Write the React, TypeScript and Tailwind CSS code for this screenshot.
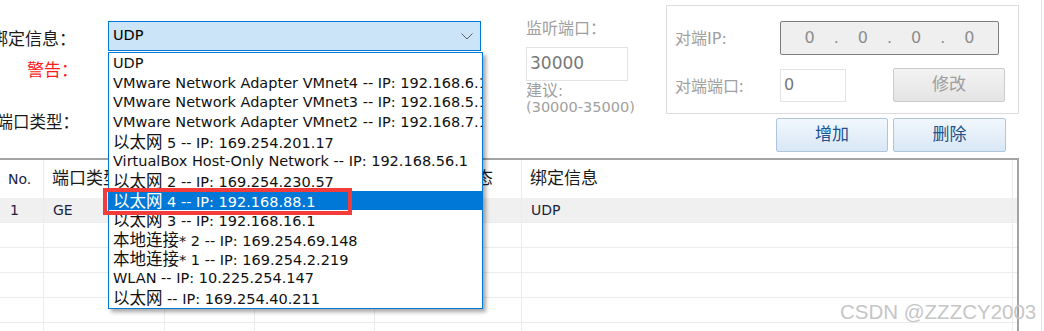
import React from "react";

const CJK = /([\u3400-\u9fff\uff00-\uffef]+)/;

// splits a mixed line so the Chinese runs get the bigger CJK size, like the Windows fallback font
function Mixed({ text, cjkClass }: { text: string; cjkClass: string }) {
  return (
    <>
      {text.split(CJK).map((part, i) =>
        CJK.test(part) ? (
          <span key={i} className={cjkClass}>
            {part}
          </span>
        ) : (
          <span key={i}>{part}</span>
        )
      )}
    </>
  );
}

const adapters = [
  "UDP",
  "VMware Network Adapter VMnet4 -- IP: 192.168.6.1",
  "VMware Network Adapter VMnet3 -- IP: 192.168.5.1",
  "VMware Network Adapter VMnet2 -- IP: 192.168.7.1",
  "以太网 5 -- IP: 169.254.201.17",
  "VirtualBox Host-Only Network -- IP: 192.168.56.1",
  "以太网 2 -- IP: 169.254.230.57",
  "以太网 4 -- IP: 192.168.88.1",
  "以太网 3 -- IP: 192.168.16.1",
  "本地连接* 2 -- IP: 169.254.69.148",
  "本地连接* 1 -- IP: 169.254.2.219",
  "WLAN -- IP: 10.225.254.147",
  "以太网 -- IP: 169.254.40.211",
];

const selectedIndex = 7;

const headers = ["No.", "端口类型", "端口编号", "本地端口", "端口连接状态", "绑定信息"];

const rows = [
  ["1", "GE", "", "", "", "UDP"],
  ["", "", "", "", "", ""],
  ["", "", "", "", "", ""],
  ["", "", "", "", "", ""],
  ["", "", "", "", "", ""],
  ["", "", "", "", "", ""],
];

const Chevron = () => (
  <svg width="12" height="7" viewBox="0 0 12 7" fill="none">
    <path d="M0.5 0.5 L6 6 L11.5 0.5" stroke="#5f5f5f" strokeWidth="1" />
  </svg>
);

const BlueButton = ({ label, width }: { label: string; width: string }) => (
  <div
    className={`${width} h-[34px] flex items-center justify-center rounded-[2px] border border-[#adc6de] bg-gradient-to-b from-[#f1f7fd] to-[#d9e7f5] text-[17px] text-[#22528f]`}
  >
    {label}
  </div>
);

export default function App() {
  return (
    <div className="relative w-[1044px] h-[331px] overflow-hidden bg-white font-['DejaVu_Sans','Noto_Sans_CJK_SC',sans-serif] text-[#1a1a1a]">
      <div className="w-[1042px] h-[331px] border-r border-[#e6e6e6]">
        {/* form area */}
        <div className="flex h-[158px]">
          {/* labels */}
          <div className="w-[108px] shrink-0 flex flex-col pt-[28px] font-['Noto_Sans_CJK_SC',sans-serif]">
            <div className="w-[76px] h-[20px] flex justify-end items-center whitespace-nowrap text-[17px]">
              <span>绑定信息：</span>
            </div>
            <div className="w-[78px] h-[20px] mt-[11px] flex justify-end items-center whitespace-nowrap text-[17px] text-[#ff1a1a]">
              <span>警告：</span>
            </div>
            <div className="w-[79px] h-[20px] mt-[32px] flex justify-end items-center whitespace-nowrap text-[16.5px]">
              <span>端口类型：</span>
            </div>
          </div>

          {/* combo box */}
          <div className="mt-[21px] w-[373px] h-[30px] shrink-0 flex items-center justify-between border border-[#0078d7] bg-[#cce4f7] pl-[4px] pr-[7px] text-[14.5px] text-black">
            <span>UDP</span>
            <Chevron />
          </div>

          {/* listen port */}
          <div className="ml-[45px] w-[102px] shrink-0 flex flex-col pt-[17px] text-[#a0a0a0]">
            <div className="h-[20px] leading-[20px] text-[16px] whitespace-nowrap font-['Noto_Sans_CJK_SC',sans-serif]">监听端口：</div>
            <div className="mt-[10px] h-[34px] border border-[#e3e3e3] flex items-center pl-[3px] text-[17px] text-[#777]">
              30000
            </div>
            <div className="mt-[2px] leading-[16px] text-[15px] whitespace-nowrap">
              <Mixed text="建议:" cjkClass="text-[16px]" />
            </div>
            <div className="leading-[16px] text-[14.5px] whitespace-nowrap">(30000-35000)</div>
          </div>

          {/* peer settings */}
          <div className="ml-[38px] shrink-0 flex flex-col">
            <div className="mt-[5px] w-[353px] h-[109px] border border-[#dcdcdc] pl-[8px] pt-[15px] text-[#a0a0a0]">
              <div className="flex items-center">
                <div className="w-[105px] text-[16px] whitespace-nowrap">
                  <Mixed text="对端IP:" cjkClass="font-['Noto_Sans_CJK_SC',sans-serif]" />
                </div>
                <div className="w-[219px] h-[34px] rounded-[2px] border border-[#7d7d7d] bg-[#efefef] flex items-center justify-around px-[14px] text-[16px] text-[#8d8d8d]">
                  <span>0</span>
                  <span>.</span>
                  <span>0</span>
                  <span>.</span>
                  <span>0</span>
                  <span>.</span>
                  <span>0</span>
                </div>
              </div>
              <div className="mt-[13px] flex items-center">
                <div className="w-[105px] text-[16px] whitespace-nowrap font-['Noto_Sans_CJK_SC',sans-serif]">对端端口:</div>
                <div className="w-[66px] h-[33px] border border-[#e3e3e3] bg-white flex items-center pl-[3px] text-[16px] text-[#777]">
                  0
                </div>
                <div className="ml-[47px] w-[112px] h-[34px] rounded-[2px] border border-[#cbcbcb] bg-gradient-to-b from-[#f3f3f3] to-[#e4e4e4] flex items-center justify-center text-[17px] text-[#9d9d9d]">
                  修改
                </div>
              </div>
            </div>
            <div className="mt-[4px] ml-[110px] flex gap-[5px]">
              <BlueButton label="增加" width="w-[112px]" />
              <BlueButton label="删除" width="w-[113px]" />
            </div>
          </div>
        </div>

        {/* table */}
        <div className="w-[1019px] h-[173px] border-t-2 border-r-2 border-[#a3a3a3]">
          <div className="grid grid-cols-[44px_121px_90px_120px_147px_491px] h-[38px] bg-white">
            {headers.map((h, i) => (
              <div
                key={i}
                className={`flex items-center whitespace-nowrap border-r border-[#ebebeb] text-[14px] text-[#1b2540] ${i === 4 ? "pl-[16px]" : "pl-[8px]"}`}
              >
                <Mixed text={h} cjkClass="text-[17px] text-[#1a1a1a]" />
              </div>
            ))}
          </div>
          {rows.map((r, ri) => (
            <div
              key={ri}
              className={`grid grid-cols-[44px_121px_90px_120px_147px_491px] h-[25px] border-b border-[#ececec] ${ri === 0 ? "bg-[#f0f0f0]" : "bg-white"}`}
            >
              {r.map((c, ci) => (
                <div
                  key={ci}
                  className={`flex items-center border-r border-[#ececec] text-[14px] text-[#1b1f3f] ${ci === 0 ? "pl-[10px]" : "pl-[9px]"}`}
                >
                  {c}
                </div>
              ))}
            </div>
          ))}
        </div>
      </div>

      {/* open drop-down list of the combo box */}
      <div className="absolute left-[108px] top-[52px] w-[375px] h-[257px] overflow-hidden border border-[#0078d7] bg-white pt-[1px] shadow-[3px_3px_4px_rgba(0,0,0,0.35)] text-[14.5px] text-[#111]">
        {adapters.map((a, i) => (
          <div
            key={i}
            className={`h-[19.5px] leading-[19.5px] pl-[4px] whitespace-nowrap ${i === selectedIndex ? "bg-[#0078d7] text-white" : ""}`}
          >
            <Mixed text={a} cjkClass="text-[16.5px] font-['Noto_Sans_CJK_SC',sans-serif]" />
          </div>
        ))}
      </div>

      {/* red annotation box */}
      <div className="absolute left-[103px] top-[188px] w-[249px] h-[27px] border-[4px] border-[#f23b3b]" />

      {/* watermark */}
      <div className="absolute left-[840px] top-[300px] text-[20.5px] leading-[24px] whitespace-nowrap font-['Liberation_Sans',sans-serif] text-[#c6c6c6]">
        CSDN @ZZZCY2003
      </div>
    </div>
  );
}
